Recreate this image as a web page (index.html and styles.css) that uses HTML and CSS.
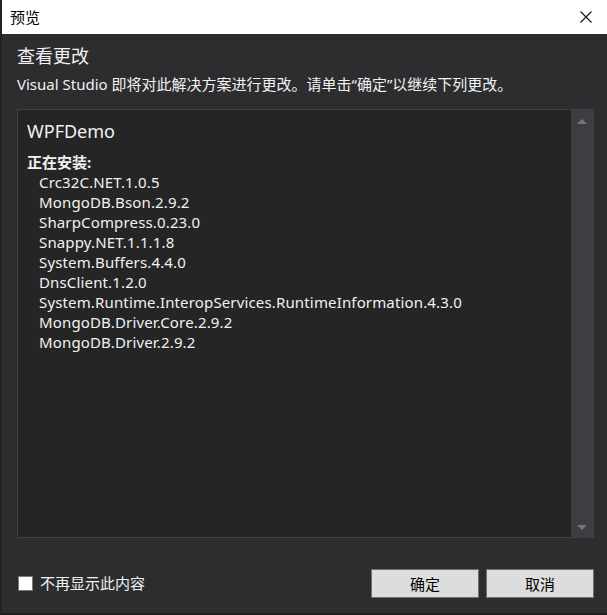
FILE: index.html
```html
<!DOCTYPE html>
<html lang="zh-CN">
<head>
<meta charset="utf-8">
<title>预览</title>
<link rel="stylesheet" href="styles.css">
</head>
<body>
<div class="window">
  <div class="titlebar">
    <span class="title">预览</span>
    <svg class="close" width="12" height="12" viewBox="0 0 12 12"><path d="M0.5 0.5 L11.5 11.5 M11.5 0.5 L0.5 11.5" stroke="#111" stroke-width="1.1" fill="none"/></svg>
  </div>
  <div class="body">
    <div class="heading">查看更改</div>
    <div class="desc">Visual Studio 即将对此解决方案进行更改。请单击“确定”以继续下列更改。</div>
    <div class="listbox">
      <div class="list-content">
        <div class="project">WPFDemo</div>
        <div class="section">正在安装:</div>
        <ul class="items">
          <li>Crc32C.NET.1.0.5</li>
          <li>MongoDB.Bson.2.9.2</li>
          <li>SharpCompress.0.23.0</li>
          <li>Snappy.NET.1.1.1.8</li>
          <li>System.Buffers.4.4.0</li>
          <li>DnsClient.1.2.0</li>
          <li>System.Runtime.InteropServices.RuntimeInformation.4.3.0</li>
          <li>MongoDB.Driver.Core.2.9.2</li>
          <li>MongoDB.Driver.2.9.2</li>
        </ul>
      </div>
      <div class="scrollbar">
        <span class="arrow up"></span>
        <span class="arrow down"></span>
      </div>
    </div>
    <div class="footer">
      <label class="check"><span class="box"></span>不再显示此内容</label>
      <div class="buttons">
        <button class="btn">确定</button>
        <button class="btn">取消</button>
      </div>
    </div>
  </div>
</div>
</body>
</html>
```

FILE: styles.css
```css
html, body {
  margin: 0;
  padding: 0;
  background: #2d2d30;
}
body {
  font-family: "Noto Sans", "Noto Sans CJK SC", sans-serif;
  font-size: 15px;
  color: #f1f1f1;
}
.window {
  width: 607px;
  height: 615px;
  display: flex;
  flex-direction: column;
  box-sizing: border-box;
  border-left: 2px solid #222224;
  border-bottom: 2px solid #1e1e1f;
}
.titlebar {
  height: 34px;
  flex: none;
  background: #ffffff;
  display: flex;
  align-items: center;
  justify-content: space-between;
  padding: 0 15px 0 8px;
  box-sizing: border-box;
  color: #000;
}
.title {
  font-size: 15px;
  line-height: 16px;
}
.close { display: block; }
.body {
  flex: 1;
  display: flex;
  flex-direction: column;
  padding: 10px 13px 0 15px;
}
.heading {
  font-size: 18px;
  line-height: 24px;
  height: 24px;
}
.desc {
  margin-top: 6px;
  line-height: 20px;
  height: 20px;
  white-space: nowrap;
}
.listbox {
  margin-top: 15px;
  height: 429px;
  box-sizing: border-box;
  border: 1px solid #3f3f46;
  background: #252526;
  display: flex;
}
.list-content {
  flex: 1;
  padding: 9px 0 0 9px;
}
.project {
  font-size: 18px;
  line-height: 24px;
}
.section {
  margin-top: 9px;
  font-weight: bold;
  line-height: 20px;
}
.items {
  list-style: none;
  margin: 0;
  padding: 0 0 0 12px;
}
.items li {
  line-height: 20px;
  letter-spacing: 0.15px;
}
.scrollbar {
  width: 22px;
  background: #3e3e42;
  display: flex;
  flex-direction: column;
  justify-content: space-between;
  align-items: center;
  padding: 9px 0 7px;
}
.arrow {
  width: 0;
  height: 0;
  border-left: 5px solid transparent;
  border-right: 5px solid transparent;
}
.arrow.up { border-bottom: 5px solid #76767a; }
.arrow.down { border-top: 5px solid #76767a; }
.footer {
  flex: 1;
  display: flex;
  align-items: center;
  justify-content: space-between;
  padding-top: 15px;
}
.check {
  display: flex;
  align-items: center;
  gap: 7px;
  line-height: 20px;
  margin-left: 1px;
}
.box {
  width: 13px;
  height: 13px;
  background: #fff;
  border: 1px solid #7a7a7a;
}
.buttons {
  display: flex;
  gap: 7px;
}
.btn {
  width: 108px;
  height: 29px;
  background: #dddddd;
  border: 1px solid #707070;
  font-family: "Noto Sans CJK SC", sans-serif;
  font-size: 15px;
  color: #000;
  padding: 0;
}
```
